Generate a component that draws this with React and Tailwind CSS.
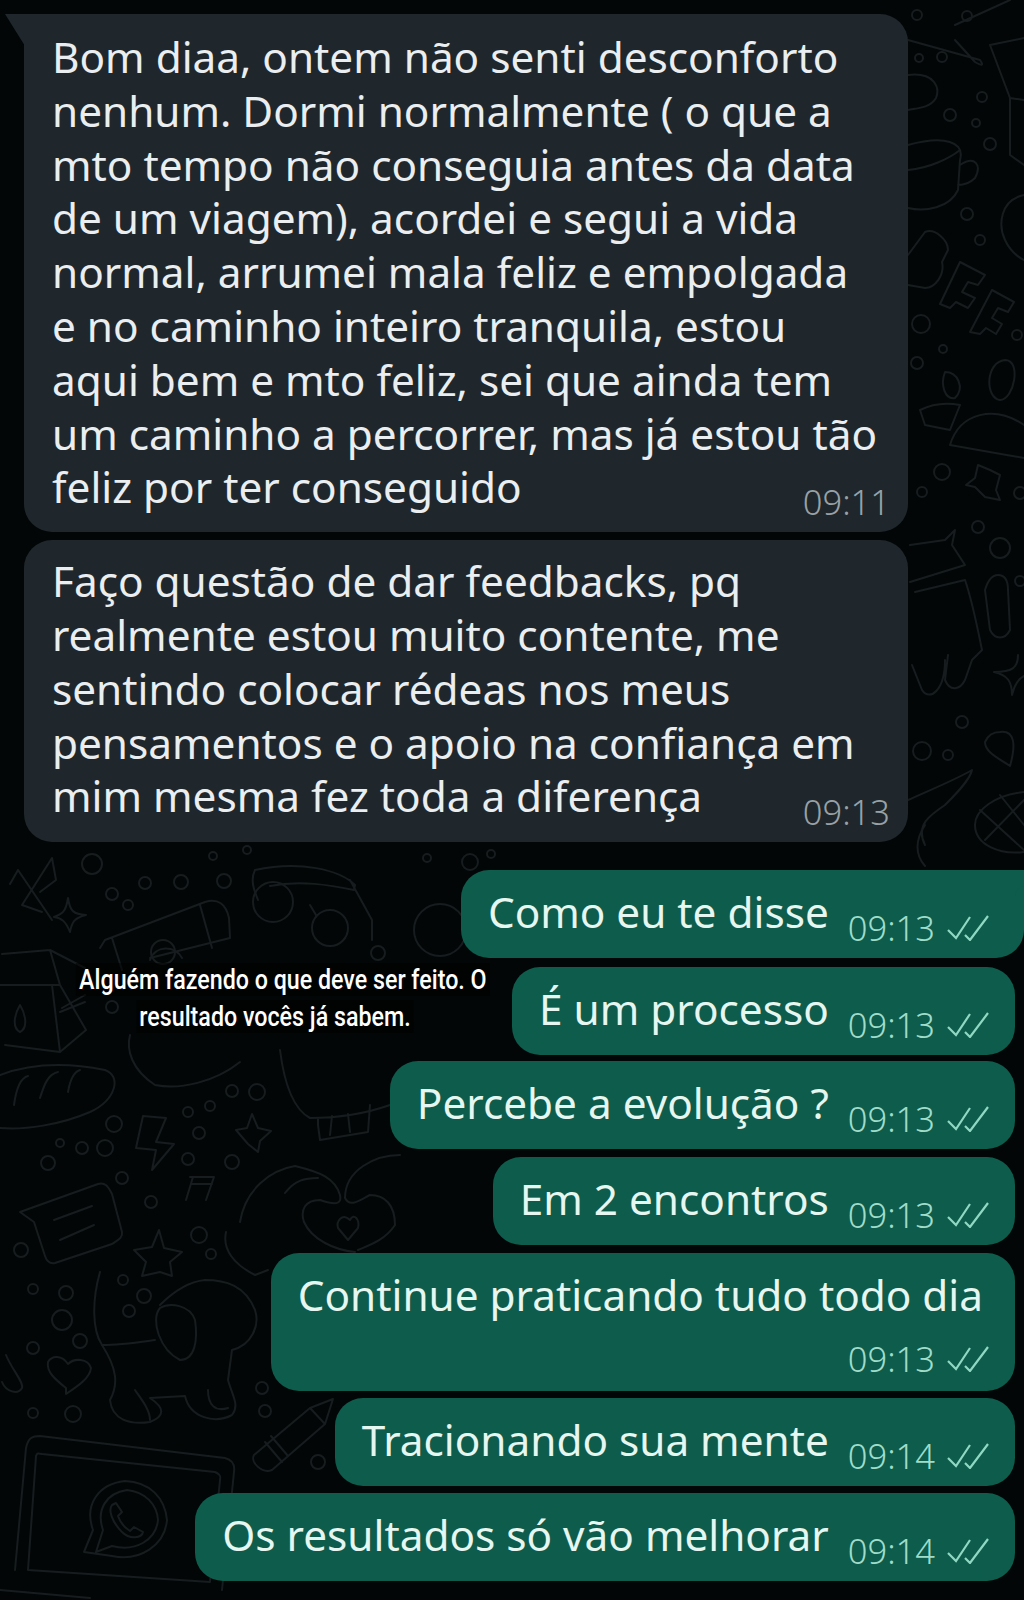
import React from 'react';

const font = 'font-["Noto_Sans",sans-serif]';

// loose dots of the wallpaper [x, y, r]
const dots = [
  [92, 864, 10], [145, 883, 6], [112, 894, 6], [181, 882, 7], [128, 905, 5], [224, 881, 7], [213, 856, 4], [247, 850, 4],
  [427, 858, 4], [470, 862, 8], [491, 854, 4], [378, 953, 7], [112, 1007, 6],
  [114, 1124, 8], [60, 1143, 4], [82, 1148, 6], [105, 1148, 8], [48, 1163, 7], [122, 1178, 6], [151, 1202, 6],
  [188, 1112, 5], [210, 1106, 5], [199, 1133, 6], [188, 1159, 6], [232, 1162, 7], [232, 1091, 6], [257, 1092, 8],
  [21, 1250, 7], [199, 1235, 8], [211, 1254, 5], [33, 1289, 5], [66, 1293, 7], [123, 1280, 5], [144, 1296, 7],
  [62, 1320, 10], [129, 1311, 6], [80, 1341, 7], [33, 1348, 6], [33, 1413, 5], [73, 1414, 8],
  [262, 1388, 6], [265, 1411, 6], [318, 1462, 7],
  [917, 15, 5], [967, 16, 5], [942, 57, 5], [919, 58, 4], [982, 97, 5], [950, 115, 6], [976, 123, 4], [990, 144, 6],
  [967, 214, 6], [980, 240, 5], [921, 324, 9], [943, 349, 4], [917, 363, 6], [1017, 335, 5],
  [942, 472, 8], [922, 492, 5], [978, 527, 6], [1000, 548, 10], [1020, 581, 5], [962, 722, 6], [922, 751, 9], [948, 755, 5], [1020, 493, 6],
];

const doodles = [
  // scissors
  'M18 870 L52 920 M52 858 L22 905 M18 870 L10 884 M52 858 L56 880 L40 892 M22 905 L42 912',
  // four point star
  'M68 898 C70 912 74 914 86 915 C74 918 72 922 70 932 C66 922 62 918 54 917 C62 914 66 912 68 898 Z',
  // bottle
  'M100 948 L105 940 L205 902 C218 898 226 904 229 918 L230 938 L150 958 M112 938 L122 970 M200 905 L212 948 M150 960 C155 945 175 945 182 958',
  // glasses
  'M255 870 C300 860 340 870 355 885 L354 890 C330 885 300 880 270 886 M255 870 C250 880 254 890 258 900 M310 905 L316 915 M350 880 L372 920 L372 940',
  // milk carton
  'M2 954 L50 950 L60 985 L86 1030 L60 1052 L5 1045 M50 950 L85 968 M0 985 L60 985 M62 1008 L85 995 M60 1012 L85 1002 M60 1052 L52 985',
  // drop in carton
  'M20 1005 C14 1015 12 1028 20 1032 C28 1028 26 1015 20 1005 Z',
  // bread
  'M0 1075 C40 1060 80 1065 105 1070 C122 1076 116 1100 90 1112 C60 1125 25 1130 0 1128 M14 1105 C16 1090 20 1078 28 1076 M40 1098 C44 1085 48 1074 58 1072 M68 1092 C70 1080 74 1072 80 1070',
  // mug
  'M130 1035 C126 1050 132 1070 155 1085 C180 1090 215 1082 240 1062',
  // notebook
  'M280 1050 C285 1090 295 1110 310 1118 C340 1118 370 1112 390 1105 M318 1118 L318 1125 L320 1140 L368 1132 L370 1105 M330 1135 L332 1116 M350 1132 L348 1114',
  // bolt
  'M143 1116 L166 1118 L156 1142 L174 1144 L152 1170 L156 1150 L136 1148 Z',
  // star
  'M252 1114 L258 1128 L271 1131 L260 1141 L258 1152 L248 1144 L236 1130 L247 1128 Z',
  // music note
  'M190 1177 L214 1177 L206 1200 M193 1177 L186 1200 M192 1184 L212 1184',
  // chat card
  'M20 1212 L98 1184 C105 1182 108 1186 112 1194 L122 1232 C123 1238 118 1240 112 1244 L55 1263 C50 1264 47 1262 45 1256 L34 1222 Z',
  'M54 1220 L92 1206 M60 1240 L94 1225',
  // star 2
  'M159 1230 L164 1248 L182 1252 L170 1262 L172 1276 L160 1272 L142 1276 L146 1262 L134 1250 L152 1247 Z',
  // hands heart
  'M226 1232 C222 1250 235 1265 255 1275 L268 1270 M240 1222 C245 1190 270 1170 295 1166 C320 1172 335 1178 340 1195 C342 1205 335 1205 320 1200 C305 1200 300 1210 304 1222 C312 1240 335 1250 355 1252 M285 1193 C295 1180 305 1178 318 1178 M345 1198 C345 1170 375 1155 400 1155 M345 1198 C350 1208 360 1200 370 1195 C385 1195 395 1205 395 1225 C385 1240 370 1245 358 1250',
  'M350 1220 C342 1212 336 1222 338 1228 L348 1240 L358 1228 C360 1220 354 1212 350 1220 Z',
  // dog
  'M100 1272 C92 1300 92 1330 102 1345 C118 1370 118 1385 110 1400 C112 1420 130 1425 150 1422 C165 1416 165 1408 150 1398 L185 1396 C190 1418 215 1424 232 1415 C240 1405 232 1395 228 1380 L232 1350 C252 1345 260 1325 255 1310 C245 1285 225 1280 205 1280 C185 1282 170 1295 160 1305',
  'M160 1308 C150 1320 160 1350 180 1360 C195 1360 198 1340 195 1320 C190 1305 170 1302 160 1308 Z',
  'M102 1345 C120 1345 140 1342 155 1340',
  'M135 1390 C142 1400 150 1410 150 1420 M208 1390 C208 1405 215 1412 228 1408',
  // drop and heart
  'M6 1355 C12 1370 24 1382 22 1388 C18 1395 6 1392 2 1382',
  'M66 1388 C56 1380 46 1372 48 1362 C52 1355 62 1355 68 1364 C74 1358 88 1358 91 1368 C90 1378 78 1386 66 1394 Z',
  // pencil
  'M254 1455 L310 1408 L333 1399 L325 1424 L272 1470 C262 1474 250 1462 254 1455 Z M265 1442 L282 1462 M271 1436 L288 1456 M310 1408 L325 1424',
  // laptop
  'M15 1570 L26 1448 C28 1438 32 1436 40 1436 L225 1458 C233 1460 235 1465 234 1472 L222 1590 M28 1570 L36 1456 C37 1453 38 1453 42 1454 L215 1472 C220 1474 221 1476 220 1480 L210 1582 L28 1570 M0 1590 L90 1598',
  // whatsapp logo
  'M84 1552 L93 1530 C84 1505 98 1484 125 1481 C150 1482 165 1498 167 1520 C165 1545 140 1562 112 1556 Z M96 1552 L103 1530 C96 1510 106 1493 127 1490 C146 1492 157 1505 158 1520 C156 1540 136 1552 112 1546 Z',
  'M112 1505 C108 1510 112 1522 122 1532 C130 1540 142 1538 143 1532 L134 1527 L130 1531 C125 1528 120 1522 118 1516 L122 1512 L116 1503 Z',
  // right column: mug, straw, letters
  'M908 40 L980 60 C984 66 982 66 975 62 L955 40 M955 25 L1010 0 M908 75 C935 72 940 88 936 98 C930 108 918 108 908 110 M908 145 C945 135 965 142 960 160 L958 190 C950 208 925 212 908 208 M908 170 C930 168 950 158 960 150 M960 165 C975 155 982 165 975 178 C968 185 960 185 958 185',
  // coffee machine
  'M990 45 L1024 38 M990 45 L1010 98 L1024 100 M1010 98 L1010 155 L1024 165 M1024 195 C1000 200 998 225 1005 240 C1012 255 1024 260 1024 260',
  // B F F
  'M908 255 L925 232 C935 228 948 240 948 250 L942 262 C945 275 935 288 925 288 L908 285',
  'M940 304 L960 262 L985 275 L978 285 L968 282 L962 292 L975 298 L968 308 L956 302 L950 308 Z',
  'M970 332 L992 290 L1014 302 L1008 312 L998 308 L992 318 L1002 324 L996 334 L986 328 L980 334 Z',
  'M1005 360 C1022 360 1014 400 1000 400 C985 398 985 362 1005 360 Z M945 372 C958 372 965 388 955 398 C945 400 940 385 945 372 Z',
  // bowl and star right
  'M920 410 C930 405 945 402 960 405 L950 430 L925 425 Z M950 445 C960 412 995 405 1024 425 M950 445 L1024 458',
  'M978 465 L990 470 L1000 475 L996 490 L1000 500 L985 497 L975 487 L966 485 L975 478 Z',
  // android
  'M910 545 L945 540 L955 530 L952 545 L965 565 L910 582 M915 592 L965 580 C972 600 978 630 982 650 L972 660 L965 680 C960 690 950 692 945 680 L948 655 M945 660 C945 690 930 702 922 690 L912 665 M998 575 C1005 575 1008 580 1008 590 L1010 630 C1005 640 995 640 990 630 L985 590 C988 580 992 575 998 575 Z',
  // four point star right
  'M1018 655 C1018 668 1012 672 994 672 C1008 675 1012 682 1012 695 C1015 682 1020 678 1024 676',
  // pin
  'M1000 732 C1015 730 1016 745 1010 766 C998 758 985 752 985 742 C988 735 994 732 1000 732 Z',
  // globe
  'M1024 792 C995 795 975 810 975 825 C975 845 1000 855 1024 852 M980 810 L1024 850 M1000 795 L1024 825 M985 840 L1024 800',
  // right carrot
  'M908 800 C930 790 955 780 972 770 C970 780 955 795 945 805 C930 815 915 825 925 845 M925 825 C915 840 915 855 925 866',
];

function Ticks() {
  return (
    <svg width="42" height="26" viewBox="0 0 42 26" fill="none" stroke="#8fd8c3" strokeWidth="2.2" className="ml-[12px] shrink-0">
      <path d="M1 15 L9 23 L23 2" />
      <path d="M18 20 L23 25 L41 1" />
    </svg>
  );
}

function Incoming({ lines, time, first }) {
  return (
    <div className={`relative ml-[24px] w-[884px] bg-[#1f272c] pl-[28px] ${first ? 'rounded-[28px] rounded-tl-none pt-[16px] pb-[18px]' : 'mt-[8px] rounded-[28px] pt-[14px] pb-[19px]'}`}>
      {first && (
        <svg width="20" height="32" viewBox="0 0 20 32" className="absolute left-[-19px] top-0">
          <path d="M0 0 L20 0 L20 32 Z" fill="#1f272c" />
        </svg>
      )}
      <div className="text-[42.3px] leading-[53.8px] text-[#eaeef0]">
        {lines.map((l) => (
          <div key={l} className="whitespace-nowrap">{l}</div>
        ))}
      </div>
      <div className="absolute bottom-[12px] right-[18px] text-[34.5px] font-light leading-[36px] text-[#98a2a6]">{time}</div>
    </div>
  );
}

function Outgoing({ text, time, mt, stacked, tail }) {
  return (
    <div className={`relative flex rounded-[28px] bg-[#0e5c4b] pl-[27px] ${mt} ${tail ? 'rounded-tr-none pr-[35px]' : 'mr-[9px] pr-[26px]'} ${stacked ? 'flex-col pt-[15px] pb-[14px]' : 'items-end pt-[15px] pb-[19px]'}`}>
      <div className={`whitespace-nowrap text-[42.3px] leading-[54px] text-[#e6f6f0] ${stacked ? 'mr-[6px]' : ''}`}>{text}</div>
      <div className={`flex items-center text-[34.5px] font-light leading-[36px] text-[#9fdcca] ${stacked ? 'mt-[19px] justify-end' : 'ml-[19px] translate-y-[7px]'}`}>
        <span>{time}</span>
        <Ticks />
      </div>
      {tail && (
        <svg width="12" height="32" viewBox="0 0 12 32" className="absolute right-0 top-[16px]">
          <path d="M12 0 C6 2 3 6 3 12 L3 32 L0 32 L0 0 Z" fill="#0e5c4b" />
        </svg>
      )}
    </div>
  );
}

export default function App() {
  return (
    <div className={`relative h-[1600px] w-[1024px] overflow-hidden bg-[#020607] pt-[14px] ${font}`}>
      {/* wallpaper doodles */}
      <svg width="1024" height="1600" viewBox="0 0 1024 1600" fill="none" stroke="#171c1f" strokeWidth="2" strokeLinejoin="round" strokeLinecap="round" className="absolute left-0 top-0">
        {doodles.map((d, i) => (
          <path key={i} d={d} />
        ))}
        {dots.map(([x, y, r], i) => (
          <circle key={i} cx={x} cy={y} r={r} />
        ))}
        <circle cx="273" cy="902" r="20" />
        <circle cx="330" cy="928" r="18" />
        <circle cx="163" cy="952" r="12" />
        <circle cx="440" cy="930" r="26" />
      </svg>

      <div className="relative flex flex-col">
        <Incoming
          first
          time="09:11"
          lines={[
            'Bom diaa, ontem não senti desconforto',
            'nenhum. Dormi normalmente ( o que a',
            'mto tempo não conseguia antes da data',
            'de um viagem), acordei e segui a vida',
            'normal, arrumei mala feliz e empolgada',
            'e no caminho inteiro tranquila, estou',
            'aqui bem e mto feliz, sei que ainda tem',
            'um caminho a percorrer, mas já estou tão',
            'feliz por ter conseguido',
          ]}
        />
        <Incoming
          time="09:13"
          lines={[
            'Faço questão de dar feedbacks, pq',
            'realmente estou muito contente, me',
            'sentindo colocar rédeas nos meus',
            'pensamentos e o apoio na confiança em',
            'mim mesma fez toda a diferença',
          ]}
        />
        <div className="mt-[28px] flex flex-col items-end">
          <Outgoing tail text="Como eu te disse" time="09:13" mt="" />
          <Outgoing text="É um processo" time="09:13" mt="mt-[9px]" />
          <Outgoing text="Percebe a evolução ?" time="09:13" mt="mt-[6px]" />
          <Outgoing text="Em 2 encontros" time="09:13" mt="mt-[8px]" />
          <Outgoing stacked text="Continue praticando tudo todo dia" time="09:13" mt="mt-[8px]" />
          <Outgoing text="Tracionando sua mente" time="09:14" mt="mt-[7px]" />
          <Outgoing text="Os resultados só vão melhorar" time="09:14" mt="mt-[7px]" />
        </div>
      </div>

      {/* caption laid over the chat */}
      <div className='absolute left-[35px] top-[961px] w-[480px] origin-center scale-x-[0.83] whitespace-nowrap text-center font-["Roboto",sans-serif] text-[28px] font-medium leading-[37px] text-white'>
        <span className="bg-black/50 px-[4px]">Alguém fazendo o que deve ser feito. O</span>
        <br />
        <span className="bg-black/50 px-[4px]">resultado vocês já sabem.</span>
      </div>
    </div>
  );
}
